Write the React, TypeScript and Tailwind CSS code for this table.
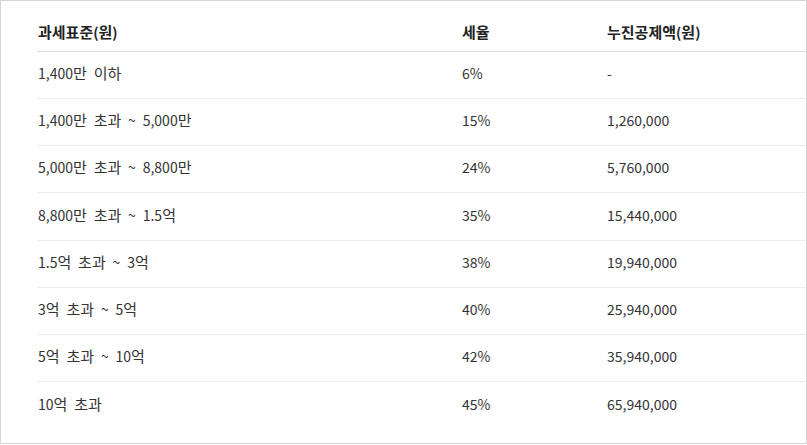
import React from "react";

const rows: [string, string, string][] = [
  ["1,400만 이하", "6%", "-"],
  ["1,400만 초과 ~ 5,000만", "15%", "1,260,000"],
  ["5,000만 초과 ~ 8,800만", "24%", "5,760,000"],
  ["8,800만 초과 ~ 1.5억", "35%", "15,440,000"],
  ["1.5억 초과 ~ 3억", "38%", "19,940,000"],
  ["3억 초과 ~ 5억", "40%", "25,940,000"],
  ["5억 초과 ~ 10억", "42%", "35,940,000"],
  ["10억 초과", "45%", "65,940,000"],
];

function K({ t }: { t: string }) {
  const parts = t.split(/([\uAC00-\uD7A3]+)/);
  return (
    <>
      {parts.map((p, i) =>
        /[\uAC00-\uD7A3]/.test(p) ? (
          <span key={i} className="text-[15px]">
            {p}
          </span>
        ) : (
          <React.Fragment key={i}>{p}</React.Fragment>
        )
      )}
    </>
  );
}

export default function App() {
  return (
    <div
      className="w-[807px] h-[444px] bg-white border border-[#d6d6d6] pl-[36px] pt-[15px] text-[14px] leading-[20px] text-[#333333] [word-spacing:3.7px]"
      style={{ fontFamily: '"Noto Sans CJK KR", "Noto Sans", sans-serif' }}
    >
      <div className="flex flex-col w-full">
        <div className="flex h-[36px] items-center border-b border-[#dcdcdc] font-bold text-[#222222] pb-[3px]">
          <div className="w-[425px] pl-[1px]">
            <K t="과세표준(원)" />
          </div>
          <div className="w-[145px]">
            <K t="세율" />
          </div>
          <div className="flex-1">
            <K t="누진공제액(원)" />
          </div>
        </div>
        {rows.map((r, i) => (
          <div
            key={i}
            className={
              i < rows.length - 1
                ? "flex h-[47.17px] items-center border-b border-[#ebebeb] pb-[4px]"
                : "flex h-[47.17px] items-center pb-[4px]"
            }
          >
            <div className="w-[425px] pl-[1px]">
              <K t={r[0]} />
            </div>
            <div className="w-[145px]">{r[1]}</div>
            <div className="flex-1">{r[2]}</div>
          </div>
        ))}
      </div>
    </div>
  );
}
